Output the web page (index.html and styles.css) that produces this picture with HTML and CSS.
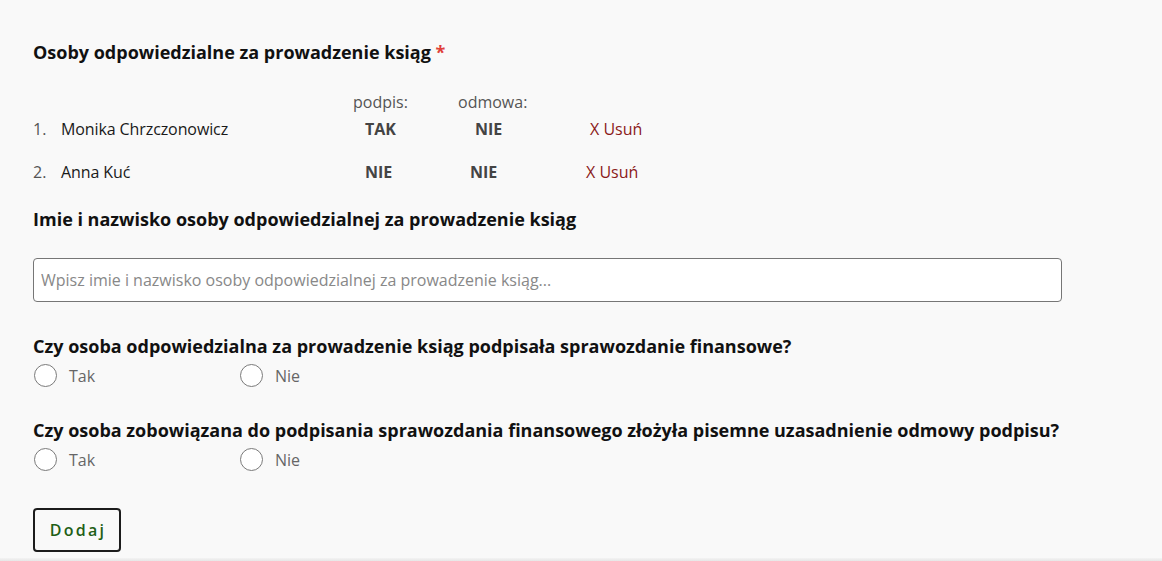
FILE: index.html
```html
<!DOCTYPE html>
<html lang="pl">
<head>
<meta charset="utf-8">
<title>Osoby odpowiedzialne za prowadzenie ksiąg</title>
<link rel="stylesheet" href="styles.css">
</head>
<body>
<main class="form">
  <h2 class="section-title">Osoby odpowiedzialne za prowadzenie ksiąg <span class="req">*</span></h2>

  <div class="people">
    <div class="people-head">
      <span class="col-sign">podpis:</span>
      <span class="col-refuse">odmowa:</span>
    </div>
    <ol class="people-list">
      <li class="person">
        <span class="num">1.</span>
        <span class="name">Monika Chrzczonowicz</span>
        <span class="val v1">TAK</span>
        <span class="val v2">NIE</span>
        <a class="remove r1" href="#">X Usuń</a>
      </li>
      <li class="person">
        <span class="num">2.</span>
        <span class="name">Anna Kuć</span>
        <span class="val v1">NIE</span>
        <span class="val v2 shift">NIE</span>
        <a class="remove r2" href="#">X Usuń</a>
      </li>
    </ol>
  </div>

  <label class="field-label" for="person-name">Imie i nazwisko osoby odpowiedzialnej za prowadzenie ksiąg</label>
  <input class="text-input" id="person-name" type="text" placeholder="Wpisz imie i nazwisko osoby odpowiedzialnej za prowadzenie ksiąg...">

  <fieldset class="question q1">
    <legend class="question-title">Czy osoba odpowiedzialna za prowadzenie ksiąg podpisała sprawozdanie finansowe?</legend>
    <div class="options">
      <label class="option"><span class="radio"></span><span class="opt-text">Tak</span></label>
      <label class="option"><span class="radio"></span><span class="opt-text">Nie</span></label>
    </div>
  </fieldset>

  <fieldset class="question q2">
    <legend class="question-title">Czy osoba zobowiązana do podpisania sprawozdania finansowego złożyła pisemne uzasadnienie odmowy podpisu?</legend>
    <div class="options">
      <label class="option"><span class="radio"></span><span class="opt-text">Tak</span></label>
      <label class="option"><span class="radio"></span><span class="opt-text">Nie</span></label>
    </div>
  </fieldset>

  <button class="btn-add" type="button">Dodaj</button>
</main>
<div class="page-edge"></div>
</body>
</html>
```

FILE: styles.css
```css
* { box-sizing: border-box; }

html, body {
  margin: 0;
  padding: 0;
  height: 100%;
}

body {
  background: #f9f9f9;
  font-family: "Open Sans", "Liberation Sans", sans-serif;
  color: #111;
  overflow: hidden;
  position: relative;
}

.form {
  padding: 40px 0 0 33px;
  width: 1062px;
}

.section-title {
  margin: 0;
  font-size: 18px;
  font-weight: 700;
  line-height: 24px;
  color: #111;
}

.req { color: #e0403a; }

.people {
  margin-top: 27px;
}

.people-head {
  display: grid;
  grid-template-columns: 320px 105px auto;
  font-size: 16px;
  color: #555;
  line-height: 22px;
}
.people-head .col-sign { grid-column: 2; }
.people-head .col-refuse { grid-column: 3; }

.people-list {
  list-style: none;
  margin: 5px 0 0;
  padding: 0;
}

.person {
  display: grid;
  grid-template-columns: 28px 304px 110px 115px auto;
  align-items: center;
  height: 22px;
  font-size: 16px;
  line-height: 22px;
  margin-bottom: 21px;
}
.person:last-child { margin-bottom: 0; }

.num { color: #555; }
.name { color: #1a1a1a; letter-spacing: -0.1px; }

.val {
  font-weight: 700;
  color: #444;
}
.shift { margin-left: -5px; }

.remove {
  color: #8b1a1a;
  text-decoration: none;
}
.r2 { margin-left: -4px; }

.field-label {
  display: block;
  margin-top: 24px;
  font-size: 18px;
  font-weight: 700;
  line-height: 24px;
  color: #111;
}

.text-input {
  display: block;
  margin-top: 27px;
  width: 1029px;
  height: 44px;
  border: 1px solid #767676;
  border-radius: 4px;
  background: #fff;
  padding: 0 7px;
  font-family: inherit;
  font-size: 16px;
  color: #333;
}
.text-input::placeholder { color: #888; }

.question {
  border: 0;
  margin: 0;
  padding: 0;
  min-width: 0;
}
.q1 { margin-top: 32px; }
.q2 { margin-top: 31px; }

.question-title {
  padding: 0;
  font-size: 18px;
  font-weight: 700;
  line-height: 24px;
  color: #111;
}

.options {
  display: flex;
  margin-top: 6px;
}

.option {
  display: flex;
  align-items: center;
  width: 206px;
  font-size: 16px;
  line-height: 22px;
  color: #666;
}

.radio {
  width: 23px;
  height: 23px;
  border: 1.5px solid #7a7a7a;
  border-radius: 50%;
  background: #fff;
  margin: 0 12px 0 1px;
  flex: none;
}

.btn-add {
  display: block;
  margin-top: 37px;
  width: 88px;
  height: 44px;
  border: 2px solid #1c1c1c;
  border-radius: 4px;
  background: transparent;
  font-family: inherit;
  font-size: 16px;
  font-weight: 600;
  letter-spacing: 2.3px;
  color: #1f5f17;
  padding: 0 0 0 2px;
}

.page-edge {
  position: absolute;
  left: 0;
  right: 0;
  bottom: 0;
  height: 3px;
  background: linear-gradient(#f4f4f4, #e6e6e6);
}
```
